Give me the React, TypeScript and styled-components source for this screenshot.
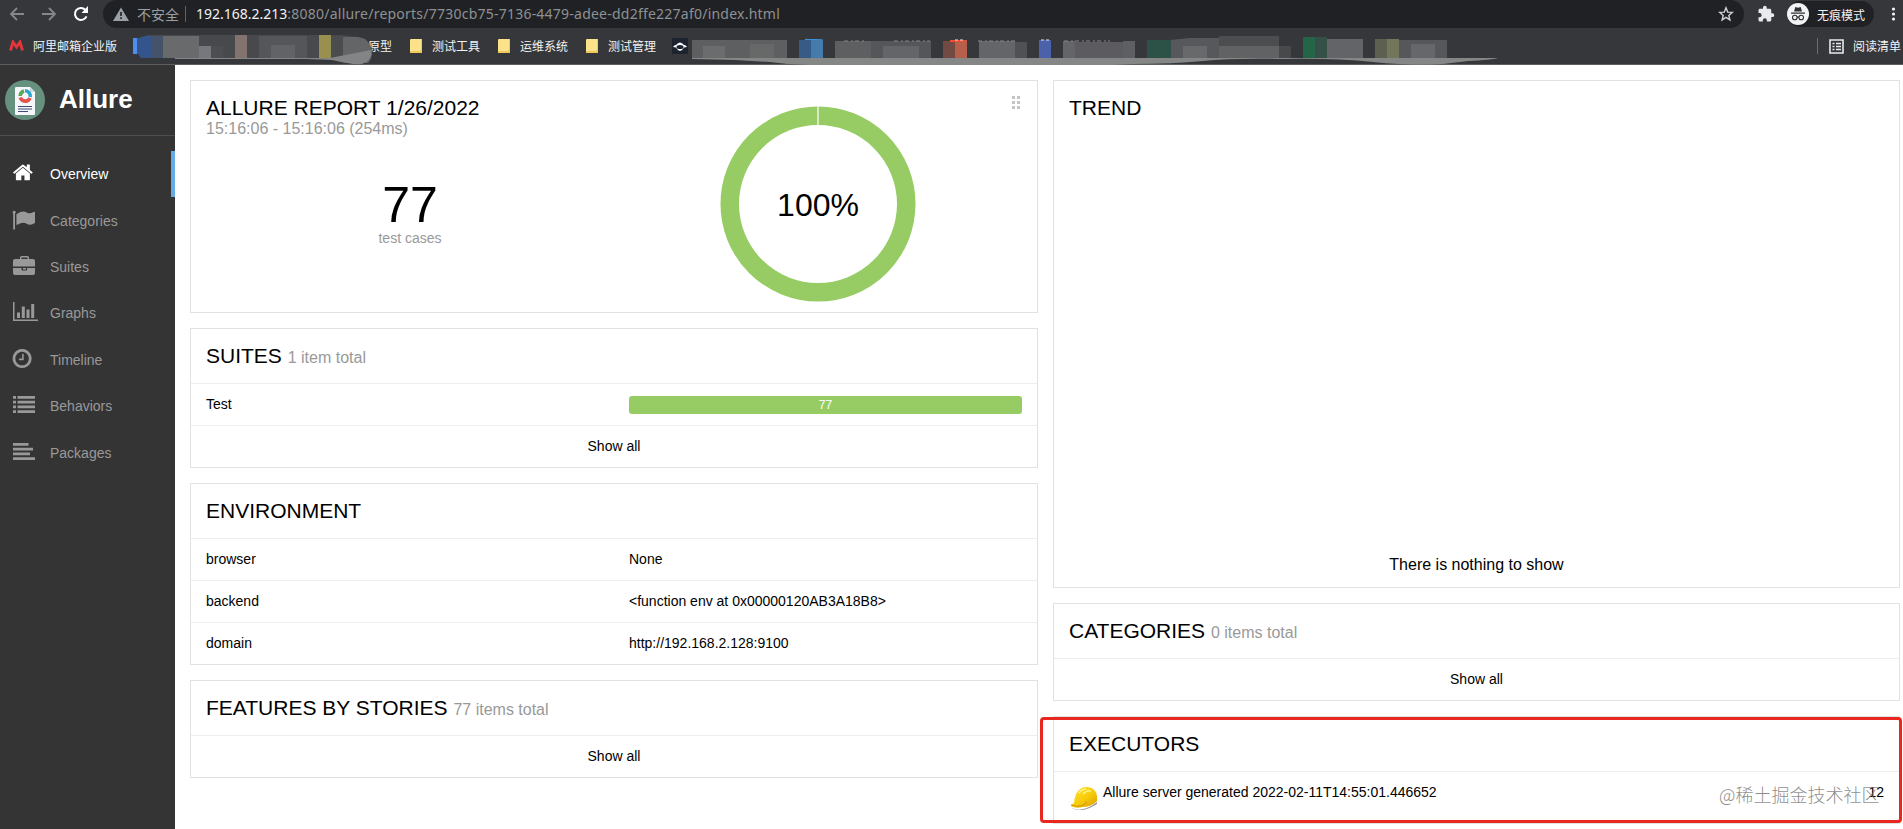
import React from "react";
import styled, { createGlobalStyle } from "styled-components";

const GlobalStyle = createGlobalStyle`
  *, *::before, *::after { box-sizing: border-box; }
  body {
    margin: 0;
    background: #fff;
    color: #000;
    font-family: "Liberation Sans", "Noto Sans CJK SC", sans-serif;
    font-size: 14px;
    overflow: hidden;
  }
`;

const uiFont = `"Noto Sans CJK SC", "Noto Sans", sans-serif`;

const Page = styled.div`
  position: relative;
  display: flex;
  flex-direction: column;
  width: 1903px;
  height: 829px;
  overflow: hidden;
`;

/* ---------- browser chrome ---------- */

const Toolbar = styled.div`
  display: flex;
  align-items: center;
  flex: none;
  height: 28px;
  background: #36373a;
`;

const ToolIcon = styled.svg<{ $gap: number }>`
  flex: none;
  margin-left: ${(p) => p.$gap}px;
`;

const AddressBar = styled.div`
  display: flex;
  align-items: center;
  width: 1641px;
  height: 28px;
  margin-left: 14px;
  padding-right: 10px;
  border-radius: 14px;
  background: #202124;
  font-family: ${uiFont};
`;

const Insecure = styled.span`
  margin-left: 8px;
  padding-right: 6px;
  border-right: 1px solid #5f6368;
  color: #9aa0a6;
  font-size: 14px;
  line-height: 16px;
`;

const Url = styled.span`
  flex: 1;
  margin-left: 10px;
  color: #8e9194;
  font-family: "Noto Sans", sans-serif;
  font-size: 14px;
  line-height: 20px;
  white-space: nowrap;
  letter-spacing: 0.23px;
`;

const Host = styled.span`
  color: #f1f3f4;
  letter-spacing: 0;
`;

const Incognito = styled.div`
  display: flex;
  align-items: center;
  width: 87px;
  height: 26px;
  margin-left: 12px;
  border-radius: 13px;
  background: #202124;
  color: #f1f3f4;
  font-family: ${uiFont};
  font-size: 12px;
  gap: 8px;
  white-space: nowrap;
`;

const BookmarkBar = styled.div`
  position: relative;
  display: flex;
  align-items: center;
  flex: none;
  height: 37px;
  border-bottom: 1px solid #5d5f62;
  background: #36373a;
  font-family: ${uiFont};
  font-size: 12px;
  line-height: 18px;
  color: #f1f3f4;
  white-space: nowrap;
`;

const Bookmark = styled.div<{ $gap: number; $space?: number }>`
  display: flex;
  align-items: center;
  gap: ${(p) => p.$space ?? 10}px;
  margin-left: ${(p) => p.$gap}px;
`;

const FolderIcon = styled.i`
  width: 12px;
  height: 14px;
  border-radius: 1px;
  background: #fce28a;
  box-shadow: inset -2px -3px 0 -1px #efc95a;
`;

const ReadingList = styled.div`
  display: flex;
  align-items: center;
  gap: 9px;
  margin-left: auto;
  margin-right: 2px;
  padding-left: 11px;
  border-left: 1px solid #6b6d70;
  line-height: 16px;
`;

const Redaction = styled.svg`
  position: absolute;
  left: 0;
  top: 0;
  pointer-events: none;
`;

/* ---------- application ---------- */

const Body = styled.div`
  display: flex;
  flex: 1;
  min-height: 0;
`;

const Sidebar = styled.nav`
  flex: none;
  width: 175px;
  background: #343434;
`;

const Brand = styled.div`
  display: flex;
  align-items: center;
  height: 71px;
  padding: 0 5px 1px;
  gap: 14px;
  border-bottom: 1px solid #4e4e4e;
  color: #fff;
  font-size: 26px;
  font-weight: bold;
`;

const NavList = styled.div`
  padding-top: 15px;
`;

const NavItem = styled.div<{ $active?: boolean }>`
  display: flex;
  align-items: center;
  height: 46.4px;
  padding-left: 12px;
  gap: 8px;
  border-right: 4px solid ${(p) => (p.$active ? "#65ace3" : "transparent")};
  color: ${(p) => (p.$active ? "#fff" : "#999")};
  svg {
    flex: none;
    position: relative;
    top: -1px;
  }
`;

const Content = styled.main`
  display: grid;
  grid-template-columns: 848px 847px;
  align-items: start;
  gap: 15px;
  padding: 15px 0 0 15px;
`;

const Column = styled.div`
  display: flex;
  flex-direction: column;
  gap: 15px;
`;

const Card = styled.section<{ $height?: number }>`
  position: relative;
  display: flex;
  flex-direction: column;
  height: ${(p) => (p.$height ? `${p.$height}px` : "auto")};
  border: 1px solid #e2e2e2;
  background: #fff;
`;

const CardHeader = styled.header`
  height: 54px;
  padding: 14px 15px 0;
`;

const Title = styled.h2`
  margin: 0;
  font-size: 21px;
  font-weight: normal;
  line-height: 25px;
  white-space: nowrap;
`;

const Total = styled.small`
  color: #999;
  font-size: 16px;
`;

const Period = styled.div`
  color: #999;
  font-size: 16px;
  line-height: 18px;
`;

const DragHandle = styled.div`
  position: absolute;
  top: 15px;
  right: 17px;
  display: grid;
  grid-template-columns: 3px 3px;
  gap: 2px;
  i {
    height: 3px;
    background: #c4c4c4;
  }
`;

const Summary = styled.div`
  display: grid;
  grid-template-columns: 1fr 1fr;
  padding: 0 15px;
  margin-top: -29px;
`;

const Count = styled.div`
  padding-top: 74px;
  text-align: center;
  color: #999;
  line-height: 16px;
  strong {
    display: block;
    color: #000;
    font-size: 50px;
    font-weight: normal;
    line-height: 50px;
  }
`;

const Donut = styled.div`
  display: grid;
  place-items: center;
  font-size: 32px;
  > * {
    grid-area: 1 / 1;
  }
  span {
    padding-top: 2px;
  }
`;

const Row = styled.div`
  display: grid;
  grid-template-columns: 1fr 1fr;
  height: 42px;
  border-top: 1px solid #eee;
`;

const Cell = styled.div`
  padding: 12px 15px 0;
  line-height: 16px;
`;

const ShowAll = styled.div`
  height: 42px;
  padding-top: 12px;
  border-top: 1px solid #eee;
  line-height: 16px;
  text-align: center;
`;

const Bar = styled.div`
  height: 18px;
  border-radius: 3px;
  background: #97cc64;
  color: #fff;
  font-size: 12px;
  line-height: 18px;
  text-align: center;
`;

const Empty = styled.div`
  margin: auto 0 13px;
  font-size: 16px;
  line-height: 18px;
  text-align: center;
`;

const Executor = styled.div`
  display: flex;
  height: 52px;
  padding: 12px 15px 0 16px;
  gap: 5px;
  border-top: 1px solid #eee;
  line-height: 16px;
  span {
    flex: 1;
  }
  svg {
    margin-top: 2px;
  }
`;

const Highlight = styled.div`
  position: absolute;
  left: 1040px;
  top: 717px;
  width: 862px;
  height: 106px;
  border: 3px solid #e8281e;
  border-radius: 4px;
`;

const Watermark = styled.div`
  position: absolute;
  left: 1719px;
  top: 781px;
  color: rgba(110, 110, 110, 0.8);
  font-family: "Noto Sans CJK SC", sans-serif;
  font-size: 18px;
  font-weight: 300;
  line-height: 26px;
  white-space: nowrap;
`;

const navIcons: Record<string, React.ReactNode> = {
  Overview: (
    <path
      transform="translate(0 -1.5) scale(0.01215)"
      d="M1472 992v480q0 26-19 45t-45 19h-384v-384h-256v384h-384q-26 0-45-19t-19-45v-480q0-1 .5-3t.5-3l575-474 575 474q1 2 1 6zm223-69l-62 74q-8 9-21 11h-3q-13 0-21-7l-692-577-692 577q-12 8-24 7-13-2-21-11l-62-74q-8-10-7-23.5t11-21.5l719-599q32-26 76-26t76 26l244 204v-195q0-14 9-23t23-9h192q14 0 23 9t9 23v408l219 182q10 8 11 21.5t-7 23.5z"
    />
  ),
  Categories: (
    <path d="M3.8 2.2a1.6 1.6 0 0 1-.8 1.4V19q0 .5-.5.5h-.8q-.5 0-.5-.5V3.600A1.600 1.600 0 1 1 3.800 2.200zM23 2.600v9.800q0 .5-.6.8-2.700 1.500-4.700 1.500-1.200 0-3.500-1.200-1.400-.7-2.900-.7-2.600 0-6 2-.9.4-.9-.5V4.700q0-.5.4-.8Q8.700 1.600 11.300 1.600q1.700 0 4.200 1.300.8.4 1.900.4 1.700 0 4.600-1.500 1-.4 1 .8z" />
  ),
  Suites: (
    <path
      fillRule="evenodd"
      d="M8 3V1.500Q8 0 9.500 0h6Q17 0 17 1.500V3h4q2 0 2 2v5.500H1V5q0-2 2-2zM9.500 3h6V1.500h-6zM1 12h8.500v1.700q0 .8.8.8h4q.8 0 .8-.8V12H23v5q0 2-2 2H3q-2 0-2-2zm10 0h3v1.500h-3z"
    />
  ),
  Graphs: (
    <path d="M1 0h1.500v17.500H26V19H1zM5 10.500h3V16H5zM9.800 4.500h3V16h-3zM14.500 7.500h3V16h-3zM19.200 2h3v14h-3z" />
  ),
  Timeline: (
    <path
      transform="translate(-1 -1.500) scale(0.01238)"
      d="M1024 544v448q0 14-9 23t-23 9h-320q-14 0-23-9t-9-23v-64q0-14 9-23t23-9h224v-352q0-14 9-23t23-9h64q14 0 23 9t9 23zm416 352q0-148-73-273t-198-198-273-73-273 73-198 198-73 273 73 273 198 198 273 73 273-73 198-198 73-273zm224 0q0 209-103 385.500t-279.500 279.500-385.500 103-385.500-103-279.500-279.500-103-385.500 103-385.500 279.500-279.500 385.500-103 385.500 103 279.500 279.500 103 385.500z"
    />
  ),
  Behaviors: (
    <path d="M1 1h3v2.800H1zM5.500 1H23v2.800H5.500zM1 5.800h3v2.800H1zM5.500 5.800H23v2.800H5.500zM1 10.500h3v2.800H1zM5.500 10.500H23v2.800H5.500zM1 15.200h3V18H1zM5.500 15.200H23V18H5.500z" />
  ),
  Packages: (
    <path d="M1 1h15.500v2.800H1zM1 5.800h20v2.800H1zM1 10.500h17v2.800H1zM1 15.200h22V18H1z" />
  ),
};

const environment = [
  ["browser", "None"],
  ["backend", "<function env at 0x00000120AB3A18B8>"],
  ["domain", "http://192.168.2.128:9100"],
];

/* x, y, width, height, colour of each pixelated block, in bookmark-bar coordinates */
const mosaic: [number, number, number, number, string][] = [
  [133, 10, 8, 16, "#4f8ef0"], [137, 8, 15, 22, "#34558c"], [151, 8, 12, 22, "#44526a"],
  [163, 8, 36, 22, "#686a6b"], [199, 18, 12, 12, "#77787d"], [211, 18, 12, 12, "#4d4e51"],
  [235, 7, 12, 23, "#83736f"], [259, 8, 48, 22, "#55565a"], [271, 17, 24, 13, "#626367"],
  [319, 7, 12, 23, "#99904f"], [331, 8, 12, 22, "#4b4c4d"], [343, 9, 30, 26, "#636567"],
  [692, 12, 95, 19, "#5d5f60"], [703, 18, 22, 12, "#6b6c6d"], [750, 16, 24, 14, "#666967"],
  [799, 12, 12, 18, "#375b84"], [811, 11, 12, 19, "#447bab"], [805, 10, 16, 2, "#3b91dc"],
  [835, 13, 36, 17, "#5e5f61"], [871, 13, 60, 17, "#55565a"], [883, 18, 36, 12, "#646568"],
  [943, 13, 12, 17, "#714a43"], [955, 11, 12, 19, "#b65f4d"], [950, 10, 16, 4, "#ed4e32"],
  [979, 13, 36, 17, "#646568"], [1015, 14, 12, 16, "#505155"], [1039, 12, 12, 18, "#4b62ab"],
  [1063, 13, 12, 17, "#646568"], [1075, 14, 48, 16, "#5c5c60"], [1123, 13, 12, 17, "#5e5f63"],
  [1147, 11, 24, 19, "#2c5147"], [1171, 10, 48, 20, "#57585b"], [1183, 18, 24, 12, "#68696b"],
  [1219, 8, 60, 10, "#4c4d4e"], [1219, 18, 60, 12, "#616264"], [1279, 18, 12, 12, "#48494b"],
  [1303, 9, 12, 21, "#246447"], [1315, 9, 12, 21, "#355047"], [1327, 11, 36, 19, "#636467"],
  [1375, 11, 12, 19, "#5d6050"], [1387, 11, 12, 19, "#73765a"], [1399, 12, 48, 18, "#56575a"],
  [1411, 16, 24, 14, "#66676a"],
];

function Chrome() {
  return (
    <>
      <Toolbar>
        <ToolIcon $gap={9} width="16" height="16" fill="none" stroke="#85878a" strokeWidth="1.8">
          <path d="M15 8H2M8 2 2 8l6 6" />
        </ToolIcon>
        <ToolIcon $gap={16} width="16" height="16" fill="none" stroke="#85878a" strokeWidth="1.800">
          <path d="M1 8h13M8 2l6 6-6 6" />
        </ToolIcon>
        <ToolIcon $gap={16} width="16" height="16" fill="none" stroke="#fff" strokeWidth="2">
          <path d="M13.500 10.300A6 6 0 1 1 12.300 3.800L14 5.500" />
          <path d="M15 0v7H8.500z" fill="#fff" stroke="none" />
        </ToolIcon>
        <AddressBar>
          <ToolIcon $gap={10} width="16" height="14" viewBox="0 0 16 14">
            <path d="M8 .5 16 14H0z" fill="#9aa0a6" />
            <path d="M7.200 5h1.600v4H7.200zM7.200 10.300h1.600v1.600H7.200z" fill="#202124" />
          </ToolIcon>
          <Insecure>不安全</Insecure>
          <Url>
            <Host>192.168.2.213</Host>:8080/allure/reports/7730cb75-7136-4479-adee-dd2ffe227af0/index.html
          </Url>
          <ToolIcon $gap={0} width="16" height="16" viewBox="0 0 16 16" fill="none" stroke="#d0d2d5" strokeWidth="1.400">
            <path d="m8 1.800 1.700 4.300 4.600.3-3.500 3 1.100 4.500L8 11.400l-3.900 2.500 1.100-4.500-3.500-3 4.600-.3z" />
          </ToolIcon>
        </AddressBar>
        <ToolIcon $gap={13} width="18" height="18" viewBox="0 0 24 24" fill="#e8eaed">
          <path d="M20.500 11H19V7c0-1.100-.9-2-2-2h-4V3.500a2.500 2.500 0 0 0-5 0V5H4c-1.100 0-2 .9-2 2v3.800h1.500a2.700 2.700 0 0 1 0 5.400H2V20c0 1.100.9 2 2 2h3.800v-1.500a2.700 2.700 0 0 1 5.400 0V22H17c1.100 0 2-.9 2-2v-4h1.500a2.500 2.500 0 0 0 0-5z" />
        </ToolIcon>
        <Incognito>
          <svg width="22" height="22" viewBox="0 0 22 22">
            <circle cx="11" cy="11" r="11" fill="#f1f3f4" />
            <path d="M7 8.500 8.300 4l2.700.7 2.700-.7L15 8.500zM4 9.500h14v1.300H4z" fill="#303134" />
            <g fill="none" stroke="#303134" strokeWidth="1.100">
              <circle cx="7.800" cy="14.500" r="2.300" />
              <circle cx="14.200" cy="14.500" r="2.300" />
              <path d="M10 14.200q1-.7 2 0" />
            </g>
          </svg>
          无痕模式
        </Incognito>
        <ToolIcon $gap={17} width="5" height="14" fill="#f1f3f4">
          <circle cx="2.500" cy="2" r="1.600" />
          <circle cx="2.500" cy="7" r="1.600" />
          <circle cx="2.500" cy="12" r="1.600" />
        </ToolIcon>
      </Toolbar>

      <BookmarkBar>
        <Bookmark $gap={9} $space={9}>
          <svg width="15" height="12" fill="none" stroke="#e5373b" strokeWidth="2.800">
            <path d="M1.500 10.500 4 2l3.500 5L11 2l2.500 8.500" />
          </svg>
          阿里邮箱企业版
        </Bookmark>
        <Bookmark $gap={251}>原型</Bookmark>
        <Bookmark $gap={18}><FolderIcon />测试工具</Bookmark>
        <Bookmark $gap={18}><FolderIcon />运维系统</Bookmark>
        <Bookmark $gap={18}><FolderIcon />测试管理</Bookmark>
        <Bookmark $gap={16}>
          <svg width="16" height="16" viewBox="0 0 16 16">
            <path d="M0 0h16v16H0z" fill="#1d2430" />
            <path d="M1 9q1-2 3-2 4-5 8 0 2 0 3 2l-3 .5q-4 7-8 0z" fill="#fff" />
            <ellipse cx="8" cy="9" rx="3.500" ry="2" fill="#1d2430" />
          </svg>
        </Bookmark>
        <ReadingList>
          <svg width="15" height="15" fill="none" stroke="#e8eaed" strokeWidth="1.600">
            <path d="M1 1h13v13H1zM3.500 4.500h2M7 4.500h5M3.500 7.500h2M7 7.500h5M3.500 10.500h2M7 10.500h5" />
          </svg>
          阅读清单
        </ReadingList>
        <Redaction width="1903" height="37">
          <defs>
            <clipPath id="smear">
              <path d="M133 10h6l9-3 62-1h105q35 0 50 5 8 7 7 16-2 10-10 10l-30-4-30-3H141l-3-4h-5zM690 12q10-5 60-3 60 2 100 3h320l50-5 120 1 110 4v25H690z" />
            </clipPath>
          </defs>
          <g clipPath="url(#smear)">
            <path d="M139 7h230v23H139z" fill="#48494c" />
            {mosaic.map(([x, y, width, height, fill], i) => (
              <rect key={i} x={x} y={y} width={width} height={height} fill={fill} />
            ))}
          </g>
          <path d="M175 30h155l41-8q2 10-9 14-10 1-30-4l-26-1H175z" fill="#828485" />
          <path d="M692 30h806q-6 2-30 3l-25 3q-30 2-70-2-40-4-90-3-50-1-80 2-30 3-70 3l-20 1H810q-20 0-40-3l-35-2-43-1z" fill="#858787" />
          <path d="M844 13h20M894 13h36M978 13h40M1064 13h46" stroke="#888" strokeDasharray="4 3 2 2" />
          <path d="M955 12h8M1041 12h10" stroke="#e8e8f6" strokeDasharray="3 2" />
        </Redaction>
      </BookmarkBar>
    </>
  );
}

export default function App() {
  return (
    <Page>
      <GlobalStyle />
      <Chrome />
      <Body>
        <Sidebar>
          <Brand>
            <svg width="40" height="40" viewBox="0 0 40 40">
              <circle cx="20" cy="20" r="20" fill="#67917f" />
              <path d="M11 7h14l5 5v22q0 1-1 1H11q-1 0-1-1V8q0-1 1-1z" fill="#f5f7fa" />
              <path d="M25 7v5h5z" fill="#cdd9dc" />
              <g fill="none" strokeWidth="3.600">
                <path d="M15.300 17.500A5.200 5.200 0 0 0 25 18" stroke="#e3554b" />
                <path d="M15.200 16A5.200 5.200 0 0 1 19 11" stroke="#5aa65b" />
                <path d="M20 10.800A5.200 5.200 0 0 1 25.200 17" stroke="#2ba7cf" />
              </g>
              <path d="M13 26.500h14M13 29h14M13 31.500h10" stroke="#3d4d70" strokeWidth="1.200" />
            </svg>
            Allure
          </Brand>
          <NavList>
            {Object.entries(navIcons).map(([name, icon]) => (
              <NavItem key={name} $active={name === "Overview"}>
                <svg width="30" height="20" fill="currentColor">{icon}</svg>
                {name}
              </NavItem>
            ))}
          </NavList>
        </Sidebar>

        <Content>
          <Column>
            <Card $height={233}>
              <CardHeader>
                <Title>ALLURE REPORT 1/26/2022</Title>
                <Period>15:16:06 - 15:16:06 (254ms)</Period>
              </CardHeader>
              <DragHandle><i /><i /><i /><i /><i /><i /></DragHandle>
              <Summary>
                <Count><strong>77</strong>test cases</Count>
                <Donut>
                  <svg width="196" height="196">
                    <circle cx="98" cy="98" r="88.250" fill="none" stroke="#97cc64" strokeWidth="18.500" />
                    <path d="M98 0v19.500" stroke="#fff" strokeWidth="1.200" />
                  </svg>
                  <span>100%</span>
                </Donut>
              </Summary>
            </Card>

            <Card>
              <CardHeader><Title>SUITES <Total>1 item total</Total></Title></CardHeader>
              <Row><Cell>Test</Cell><Cell><Bar>77</Bar></Cell></Row>
              <ShowAll>Show all</ShowAll>
            </Card>

            <Card>
              <CardHeader><Title>ENVIRONMENT</Title></CardHeader>
              {environment.map(([key, value]) => (
                <Row key={key}><Cell>{key}</Cell><Cell>{value}</Cell></Row>
              ))}
            </Card>

            <Card>
              <CardHeader><Title>FEATURES BY STORIES <Total>77 items total</Total></Title></CardHeader>
              <ShowAll>Show all</ShowAll>
            </Card>
          </Column>

          <Column>
            <Card $height={508}>
              <CardHeader><Title>TREND</Title></CardHeader>
              <Empty>There is nothing to show</Empty>
            </Card>

            <Card>
              <CardHeader><Title>CATEGORIES <Total>0 items total</Total></Title></CardHeader>
              <ShowAll>Show all</ShowAll>
            </Card>

            <Card>
              <CardHeader><Title>EXECUTORS</Title></CardHeader>
              <Executor>
                <svg width="28" height="24" viewBox="0 0 28 24">
                  <defs>
                    <linearGradient id="helmet" x1="0" y1="0" x2="1" y2="1">
                      <stop offset="0" stopColor="#ffe536" />
                      <stop offset=".55" stopColor="#f8cb08" />
                      <stop offset="1" stopColor="#d79b00" />
                    </linearGradient>
                  </defs>
                  <path d="M1 21q5 4 12 2 6-1 14-7v2q-8 5-14 6-8 1-12-3z" fill="#999" />
                  <path d="M4 17C5 6 10 1 16 1c8 0 12 5 11 14-4 4-9 6-14 6q-8 2-12-1 0-2 3-3z" fill="url(#helmet)" />
                  <path d="M1 19q6 2 10 1 3-1 6-4" fill="none" stroke="#c99100" />
                  <path d="M9 7q3-4 7-4M13 8q4-4 8-3" fill="none" stroke="#fff48b" strokeWidth="1.500" />
                </svg>
                <span>Allure server generated 2022-02-11T14:55:01.446652</span>
                12
              </Executor>
            </Card>
          </Column>
        </Content>
      </Body>
      <Highlight />
      <Watermark>@稀土掘金技术社区</Watermark>
    </Page>
  );
}
